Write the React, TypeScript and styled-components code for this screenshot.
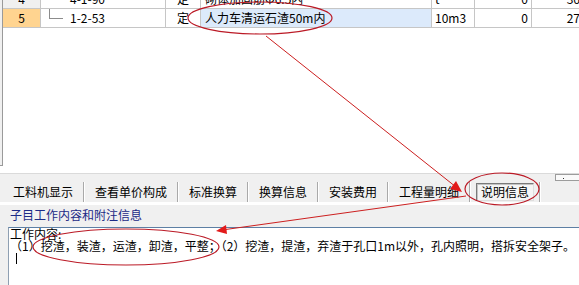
import styled, {createGlobalStyle} from 'styled-components';

const GlobalStyle = createGlobalStyle`
  html, body {
    margin: 0;
    padding: 0;
    background: #f0f0f0;
  }

  body {
    font-family: "Noto Sans CJK SC", sans-serif;
    font-size: 12px;
    color: #000;
  }
`;

const Screen = styled.div`
  position: relative;
  width: 579px;
  height: 285px;
  overflow: hidden;
  display: flex;
  flex-direction: column;
  background: #f0f0f0;
`;

const GridPane = styled.div`
  display: flex;
  height: 173px;
  flex: none;
  background: #fff;
`;

const Rail = styled.div`
  width: 2px;
  height: 165px;
  flex: none;
  background: #f0f0f0;
  border-right: 1px solid #9a9a9a;
  border-bottom: 1px solid #9a9a9a;
`;

const GridBody = styled.div`
  flex: 1;
  overflow: hidden;
  background: #fff;
`;

const Rows = styled.div`
  margin-top: -10px;
`;

const Row = styled.div`
  display: grid;
  grid-template-columns: 38px 125px 35px 231px 43px 57px 82px;
  height: 19px;
`;

const Cell = styled.div<{ $align?: 'left' | 'center' | 'right'; $bg?: string; $pad?: number }>`
  box-sizing: border-box;
  display: flex;
  align-items: center;
  justify-content: ${p => p.$align === 'center' ? 'center' : p.$align === 'right' ? 'flex-end' : 'flex-start'};
  padding: ${p => p.$align === 'right' ? `0 ${p.$pad ?? 3}px 0 0` : `0 0 0 ${p.$pad ?? 0}px`};
  background: ${p => p.$bg ?? '#fff'};
  border-right: 1px solid #c6c6c6;
  border-bottom: 1px solid #c6c6c6;
  white-space: nowrap;
  overflow: hidden;
  line-height: 18px;
`;

const CodeCell = styled(Cell)`
  align-items: stretch;
`;

const Connector = styled.span`
  flex: none;
  align-self: flex-start;
  width: 13px;
  height: 9px;
  margin-left: 8px;
  border-left: 1px solid #8c8c8c;
  border-bottom: 1px solid #8c8c8c;
`;

const CodeText = styled.span<{ $indent?: number }>`
  align-self: center;
  margin-left: ${p => p.$indent ?? 7}px;
`;

const TabBar = styled.div`
  display: flex;
  align-items: flex-end;
  height: 28px;
  padding-left: 2px;
  border-top: 1px solid #dadada;
  border-bottom: 3px solid #fff;
  flex: none;
`;

const Tab = styled.div`
  height: 20px;
  line-height: 20px;
  padding: 0 10px 0 11px;
  border-right: 1px solid #a9a9a9;
  box-shadow: 1px 0 0 #fff;
  white-space: nowrap;
  display: flex;
  align-items: center;
`;

const TabLabel = styled.span<{ $active?: boolean }>`
  ${p => p.$active && `
    margin: 0 -5px;
    padding: 0 4px;
    height: 16px;
    line-height: 16px;
    background: #f5f5f5;
    border: 1px solid;
    border-color: #7a7a7a #dedede #dedede #7a7a7a;
    box-shadow: inset 1px 1px 0 #c4c4c4;
  `}
`;

const Grip = styled.div`
  position: relative;
  align-self: flex-start;
  margin-left: auto;
  margin-right: -4px;
  width: 26px;
  height: 5px;
  border: 1px solid #9c9c9c;
  background: #fafafa;

  &::after {
    content: '';
    position: absolute;
    left: 7px;
    top: 3px;
    width: 1px;
    height: 1px;
    background: #333;
  }
`;

const InfoHeader = styled.div`
  height: 22px;
  padding: 1px 0 0 10px;
  box-sizing: border-box;
  line-height: 18px;
  color: #1c2a86;
  flex: none;
`;

const InfoText = styled.div`
  flex: 1;
  margin-left: 8px;
  padding: 0 0 0 1px;
  background: #fff;
  border-top: 1px solid #5d7fa4;
  border-left: 1px solid #8e9fb2;
  line-height: 12px;
  white-space: nowrap;
`;

const Line = styled.div`
  height: 12px;
`;

const Caret = styled.span`
  display: inline-block;
  width: 1px;
  height: 11px;
  margin: 1px 0 0 6px;
  background: #000;
`;

const Annotations = styled.svg`
  position: absolute;
  left: 0;
  top: 0;
  pointer-events: none;
`;

const tabs = ['工料机显示', '查看单价构成', '标准换算', '换算信息', '安装费用', '工程量明细', '说明信息'];

const App = () => {
  return (
    <>
      <GlobalStyle/>
      <Screen>
        <GridPane>
          <Rail/>
          <GridBody>
            <Rows>
              <Row>
                <Cell $align="center" $bg="#f0f0f0">4</Cell>
                <CodeCell><CodeText $indent={29}>4-1-90</CodeText></CodeCell>
                <Cell $align="center">定</Cell>
                <Cell $pad={4}>砌体加固筋Φ6.5内</Cell>
                <Cell $pad={3}>t</Cell>
                <Cell $align="right">0</Cell>
                <Cell $align="right">3614.52</Cell>
              </Row>
              <Row>
                <Cell $align="center" $bg="#ffd490">5</Cell>
                <CodeCell><Connector/><CodeText>1-2-53</CodeText></CodeCell>
                <Cell $align="center">定</Cell>
                <Cell $pad={4} $bg="#dceafb">人力车清运石渣50m内</Cell>
                <Cell $pad={3}>10m3</Cell>
                <Cell $align="right">0</Cell>
                <Cell $align="right">2736.15</Cell>
              </Row>
            </Rows>
          </GridBody>
        </GridPane>

        <TabBar>
          {tabs.map(t => (
            <Tab key={t}>
              <TabLabel $active={t === '说明信息'}>{t}</TabLabel>
            </Tab>
          ))}
          <Grip/>
        </TabBar>

        <InfoHeader>子目工作内容和附注信息</InfoHeader>

        <InfoText>
          <Line>工作内容:</Line>
          <Line>（1）挖渣，装渣，运渣，卸渣，平整；（2）挖渣，提渣，弃渣于孔口1m以外，孔内照明，搭拆安全架子。</Line>
          <Line><Caret/></Line>
        </InfoText>

        <Annotations width="579" height="285" viewBox="0 0 579 285">
          <g fill="none" stroke="#bb1a26" strokeWidth="1.2">
            <ellipse cx="260" cy="18" rx="72" ry="16"/>
            <ellipse cx="502" cy="189" rx="37" ry="16"/>
            <ellipse cx="126" cy="247" rx="93" ry="18"/>
          </g>
          <g stroke="#cc1f1f" strokeWidth="1">
            <line x1="266" y1="36" x2="456" y2="187"/>
            <line x1="466" y1="196" x2="222" y2="230"/>
          </g>
          <g fill="#e21a1a">
            <polygon points="462,192 450,189 456,181"/>
            <polygon points="216,231 227,234 226,225"/>
          </g>
        </Annotations>
      </Screen>
    </>
  );
};

export default App;
